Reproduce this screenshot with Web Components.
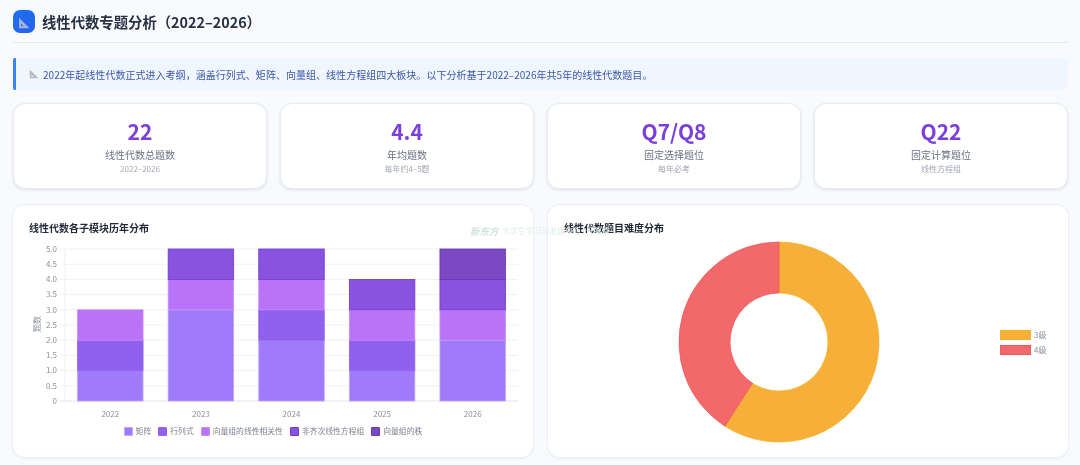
<!DOCTYPE html>
<html lang="zh">
<head>
<meta charset="utf-8">
<title>线性代数专题分析</title>
<style>
  html, body { margin: 0; background: #f8fafd; }
  body { font-family: "Noto Sans CJK SC", "Noto Sans", sans-serif; color: #1f2937; }
</style>
</head>
<body>
<report-page>
  <page-header>线性代数专题分析（2022–2026）</page-header>
  <info-note>2022年起线性代数正式进入考纲，涵盖行列式、矩阵、向量组、线性方程组四大板块。以下分析基于2022–2026年共5年的线性代数题目。</info-note>
  <stat-row>
    <stat-card value="22" label="线性代数总题数" sub="2022–2026"></stat-card>
    <stat-card value="4.4" label="年均题数" sub="每年约4–5题"></stat-card>
    <stat-card value="Q7/Q8" label="固定选择题位" sub="每年必考"></stat-card>
    <stat-card value="Q22" label="固定计算题位" sub="线性方程组"></stat-card>
  </stat-row>
  <chart-row>
    <chart-card title-text="线性代数各子模块历年分布"><stacked-bars></stacked-bars></chart-card>
    <chart-card title-text="线性代数题目难度分布"><difficulty-donut></difficulty-donut></chart-card>
  </chart-row>
  <water-mark></water-mark>
</report-page>

<script>
const ICON_RULER = (fill, hole) => `
  <svg viewBox="0 0 12 12" width="100%" height="100%" style="display:block" aria-hidden="true">
    <path fill-rule="evenodd" fill="${fill}" d="M1 .8 11.4 11.2H1ZM3 6.6V9.2H5.6Z"/>
    <path fill="${hole}" d="M1 9.4h1M1 7.4h1M1 5.4h1M1 3.4h1" stroke="${hole}" stroke-width=".5"/>
  </svg>`;

class ReportPage extends HTMLElement {
  constructor() {
    super();
    this.attachShadow({ mode: "open" });
    this.shadowRoot.innerHTML = `
    <style>
      :host {
        display: flex;
        flex-direction: column;
        position: relative;
        box-sizing: border-box;
        width: 1080px;
        height: 465px;
        padding: 10px 12px 0 13px;
        overflow: hidden;
        filter: blur(0.4px);
      }
    </style>
    <slot></slot>
    `;
  }
}

class PageHeader extends HTMLElement {
  constructor() {
    super();
    this.attachShadow({ mode: "open" });
    this.shadowRoot.innerHTML = `
    <style>
      :host {
        display: flex;
        align-items: center;
        height: 32px;
        border-bottom: 1px solid #e3e7ee;
        font-size: 14.35px;
        font-weight: 700;
        color: #273142;
      }
      .wrap { display: flex; align-items: center; gap: 7px; height: 23px; margin-bottom: 9px; }
      .icon {
        width: 22px;
        height: 23px;
        border-radius: 7px;
        background: linear-gradient(135deg, #1d6ff2, #2563eb);
        display: flex;
        align-items: center;
        justify-content: center;
      }
      .icon span { width: 12px; height: 12px; display: block; margin-top: 2px; }
    </style>
    <div class="wrap">
      <div class="icon"><span>${ICON_RULER("#a9b4d8", "#7f8fc4")}</span></div>
      <slot></slot>
    </div>
    `;
  }
}

class InfoNote extends HTMLElement {
  constructor() {
    super();
    this.attachShadow({ mode: "open" });
    this.shadowRoot.innerHTML = `
    <style>
      :host {
        display: flex;
        align-items: center;
        gap: 4px;
        box-sizing: border-box;
        height: 32px;
        margin-top: 15px;
        padding-left: 13px;
        background: #eff6ff;
        border-left: 3px solid #3b82f6;
        border-radius: 2px 8px 8px 2px;
        font-size: 10.04px;
        color: #3e57a8;
      }
      .icon { width: 10px; height: 10px; flex: none; }
    </style>
    <span class="icon">${ICON_RULER("#b9bcc4", "#9a9ea8")}</span>
    <slot></slot>
    `;
  }
}

class StatRow extends HTMLElement {
  constructor() {
    super();
    this.attachShadow({ mode: "open" });
    this.shadowRoot.innerHTML = `
    <style>
      :host {
        display: grid;
        grid-template-columns: repeat(4, 1fr);
        gap: 13px;
        margin-top: 13px;
      }
    </style>
    <slot></slot>
    `;
  }
}

class StatCard extends HTMLElement {
  constructor() {
    super();
    this.attachShadow({ mode: "open" });
    this.shadowRoot.innerHTML = `
    <style>
      :host {
        display: flex;
        flex-direction: column;
        align-items: center;
        box-sizing: border-box;
        height: 86px;
        padding-top: 12px;
        background: #fff;
        border: 1px solid #e9ebef;
        border-radius: 12px;
        box-shadow: 0 1px 3px rgba(30, 41, 59, .12);
      }
      .value { font-size: 21px; font-weight: 700; line-height: 30px; color: #7a3fdc; }
      .label { font-size: 10px; line-height: 14px; margin-top: 2px; color: #6b7280; }
      .sub { font-size: 8px; line-height: 12px; margin-top: 1px; color: #a0a6b1; }
    </style>
    <div class="value"></div>
    <div class="label"></div>
    <div class="sub"></div>
    `;
  }

  connectedCallback() {
    this.shadowRoot.querySelector(".value").textContent = this.getAttribute("value");
    this.shadowRoot.querySelector(".label").textContent = this.getAttribute("label");
    this.shadowRoot.querySelector(".sub").textContent = this.getAttribute("sub");
  }
}

class ChartRow extends HTMLElement {
  constructor() {
    super();
    this.attachShadow({ mode: "open" });
    this.shadowRoot.innerHTML = `
    <style>
      :host {
        display: grid;
        grid-template-columns: 520px 520px;
        gap: 15px;
        margin-top: 16px;
      }
    </style>
    <slot></slot>
    `;
  }
}

class ChartCard extends HTMLElement {
  constructor() {
    super();
    this.attachShadow({ mode: "open" });
    this.shadowRoot.innerHTML = `
    <style>
      :host {
        display: block;
        box-sizing: border-box;
        height: 252px;
        background: #fff;
        border-radius: 12px;
        box-shadow: 0 0 0 1px #eceff3, 0 1px 3px rgba(30, 41, 59, .08);
      }
      h3 {
        margin: 0;
        height: 37px;
        box-sizing: border-box;
        padding: 15px 0 0 16px;
        font-size: 10px;
        line-height: 15px;
        font-weight: 700;
        color: #1f2937;
      }
    </style>
    <h3></h3>
    <slot></slot>
    `;
  }

  connectedCallback() {
    this.shadowRoot.querySelector("h3").textContent = this.getAttribute("title-text");
  }
}

// same order as the legend, bottom of the stack first
const SERIES = [
  { name: "矩阵", fill: "#a07bf9", edge: "#bfa6fb" },
  { name: "行列式", fill: "#9060ee", edge: "#9060ee" },
  { name: "向量组的线性相关性", fill: "#b873f8", edge: "#c78ffa" },
  { name: "非齐次线性方程组", fill: "#8853e0", edge: "#7238c8" },
  { name: "向量组的秩", fill: "#7b49c2", edge: "#6a35b4" },
];
const YEARS = [
  ["2022", [1, 1, 1, 0, 0]],
  ["2023", [3, 0, 1, 1, 0]],
  ["2024", [2, 1, 1, 1, 0]],
  ["2025", [1, 1, 1, 1, 0]],
  ["2026", [2, 0, 1, 1, 1]],
];

class StackedBars extends HTMLElement {
  constructor() {
    super();
    this.attachShadow({ mode: "open" });
  }

  connectedCallback() {
    const left = 52, right = 505, bottom = 159, unit = 30.4, step = 90.6, barW = 65.5;
    let svg = "";

    for (let i = 0; i <= 10; i++) {
      const v = i / 2;
      const y = bottom - v * unit;
      svg += `<line x1="47" x2="${right}" y1="${y}" y2="${y}" stroke="${i ? "#f0f1f5" : "#e2e4ea"}" stroke-width="1"/>`;
      svg += `<text x="44" y="${y + 2.8}" text-anchor="end" class="tick">${i ? v.toFixed(1) : "0"}</text>`;
    }
    svg += `<line x1="${left}" x2="${left}" y1="${bottom - 5 * unit}" y2="${bottom}" stroke="#eceef2"/>`;
    svg += `<text transform="translate(27 82) rotate(-90)" text-anchor="middle" class="tick">题数</text>`;

    YEARS.forEach(([year, counts], i) => {
      const cx = left + step * (i + 0.5);
      let base = 0;
      counts.forEach((n, s) => {
        if (!n) return;
        const h = n * unit;
        const y = bottom - (base + n) * unit;
        svg += `<rect x="${cx - barW / 2}" y="${y}" width="${barW}" height="${h}" fill="${SERIES[s].fill}" stroke="${SERIES[s].edge}" stroke-width=".8"/>`;
        base += n;
      });
      svg += `<text x="${cx}" y="175" text-anchor="middle" class="tick">${year}</text>`;
    });

    const legend = SERIES.map(s => `<span class="item"><i style="background:${s.fill};border-color:${s.edge}"></i>${s.name}</span>`).join("");

    this.shadowRoot.innerHTML = `
    <style>
      :host { display: block; }
      svg { display: block; }
      .tick { font-size: 8px; fill: #8a909b; }
      .legend {
        display: flex;
        justify-content: center;
        gap: 7px;
        margin-top: 3px;
        font-size: 7.8px;
        line-height: 12px;
        color: #7c828d;
      }
      .item { display: flex; align-items: center; gap: 3px; }
      i { width: 7px; height: 7px; border: 1px solid; border-radius: 1px; display: block; }
    </style>
    <svg width="520" height="180" viewBox="0 0 520 180">${svg}</svg>
    <div class="legend">${legend}</div>
    `;
  }
}

class DifficultyDonut extends HTMLElement {
  constructor() {
    super();
    this.attachShadow({ mode: "open" });
  }

  slice(from, to, fill, edge) {
    const R = 100, r = 49, c = 100;
    const pt = (rad, a) => `${c + rad * Math.sin(a)} ${c - rad * Math.cos(a)}`;
    const big = to - from > Math.PI ? 1 : 0;
    return `<path d="M${pt(R, from)}A${R} ${R} 0 ${big} 1 ${pt(R, to)}L${pt(r, to)}A${r} ${r} 0 ${big} 0 ${pt(r, from)}Z" fill="${fill}" stroke="${edge}" stroke-width=".8"/>`;
  }

  connectedCallback() {
    const split = (13 / 22) * Math.PI * 2;
    this.shadowRoot.innerHTML = `
    <style>
      :host {
        display: flex;
        align-items: center;
        height: 200px;
        padding: 0 22px 0 16px;
      }
      .plot { width: 429px; display: flex; justify-content: center; flex: none; }
      svg { display: block; overflow: visible; }
      .legend {
        margin-left: 7px;
        flex: none;
        display: flex;
        flex-direction: column;
        gap: 5px;
        font-size: 8px;
        line-height: 10px;
        color: #8a909b;
        white-space: nowrap;
      }
      .item { display: flex; align-items: center; gap: 3px; }
      i { width: 29px; height: 8px; border: 1px solid; display: block; flex: none; }
    </style>
    <div class="plot">
      <svg width="200" height="200" viewBox="0 0 200 200">
        ${this.slice(0, split, "#f6af38", "#f5b22e")}
        ${this.slice(split, Math.PI * 2, "#f3686b", "#ee5a5e")}
      </svg>
    </div>
    <div class="legend">
      <span class="item"><i style="background:#f6af38;border-color:#f5b22e"></i>3级</span>
      <span class="item"><i style="background:#f3686b;border-color:#ee5a5e"></i>4级</span>
    </div>
    `;
  }
}

// faint publisher mark that sits over the two chart cards
class WaterMark extends HTMLElement {
  constructor() {
    super();
    this.attachShadow({ mode: "open" });
    this.shadowRoot.innerHTML = `
    <style>
      :host {
        position: absolute;
        left: 470px;
        top: 225px;
        display: flex;
        align-items: center;
        gap: 4px;
        font-size: 7.8px;
        line-height: 12px;
        color: #dfece8;
        white-space: nowrap;
      }
      b { font-size: 9.5px; font-style: italic; color: #cfe3db; }
    </style>
    <b>新东方</b><span>大学生学习与发展中心 | 开眼信</span>
    `;
  }
}

customElements.define("report-page", ReportPage);
customElements.define("page-header", PageHeader);
customElements.define("info-note", InfoNote);
customElements.define("stat-row", StatRow);
customElements.define("stat-card", StatCard);
customElements.define("chart-row", ChartRow);
customElements.define("chart-card", ChartCard);
customElements.define("stacked-bars", StackedBars);
customElements.define("difficulty-donut", DifficultyDonut);
customElements.define("water-mark", WaterMark);
</script>
</body>
</html>
